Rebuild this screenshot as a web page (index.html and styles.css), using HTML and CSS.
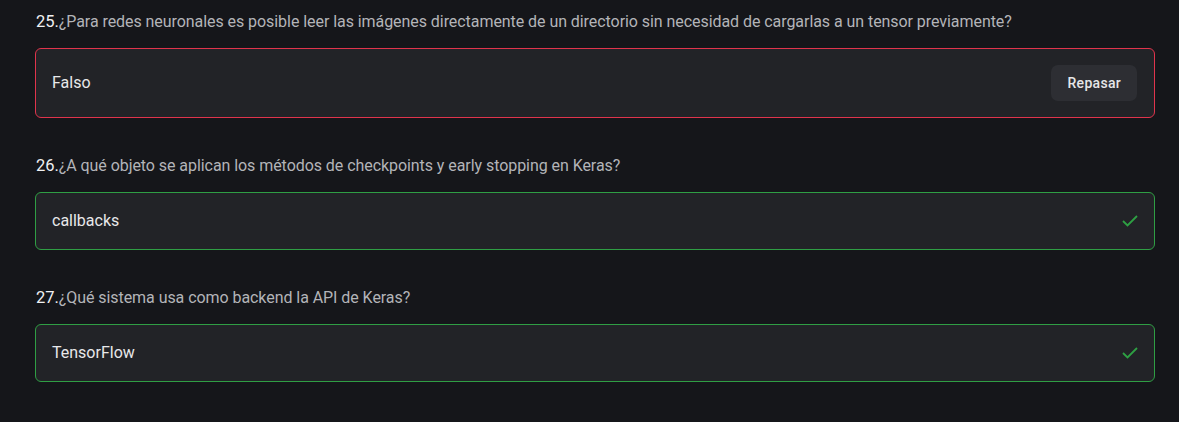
FILE: index.html
```html
<!DOCTYPE html>
<html lang="es">
<head>
<meta charset="utf-8">
<title>Preguntas</title>
<link rel="stylesheet" href="styles.css">
</head>
<body>
<main class="list">
  <section class="item">
    <p class="question"><span class="num">25.</span>¿Para redes neuronales es posible leer las imágenes directamente de un directorio sin necesidad de cargarlas a un tensor previamente?</p>
    <div class="answer wrong">
      <span class="text">Falso</span>
      <button class="review">Repasar</button>
    </div>
  </section>
  <section class="item">
    <p class="question"><span class="num">26.</span>¿A qué objeto se aplican los métodos de checkpoints y early stopping en Keras?</p>
    <div class="answer right">
      <span class="text">callbacks</span>
      <svg class="check" width="18" height="14" viewBox="0 0 18 14" aria-hidden="true"><path d="M2 7 L6.5 11.5 L16 2" fill="none" stroke="#2ea043" stroke-width="1.8"/></svg>
    </div>
  </section>
  <section class="item">
    <p class="question"><span class="num">27.</span>¿Qué sistema usa como backend la API de Keras?</p>
    <div class="answer right">
      <span class="text">TensorFlow</span>
      <svg class="check" width="18" height="14" viewBox="0 0 18 14" aria-hidden="true"><path d="M2 7 L6.5 11.5 L16 2" fill="none" stroke="#2ea043" stroke-width="1.8"/></svg>
    </div>
  </section>
</main>
</body>
</html>
```
FILE: styles.css
```css
html, body {
  margin: 0;
  padding: 0;
  background: #15161a;
}
body {
  font-family: Roboto, "Noto Sans", sans-serif;
  color: #e6e6e8;
}
.list {
  width: 1120px;
  padding: 10px 0 0 35px;
  display: flex;
  flex-direction: column;
  gap: 36px;
}
.item {
  display: flex;
  flex-direction: column;
  gap: 14px;
}
.question {
  margin: 0;
  padding-left: 1px;
  font-size: 16px;
  line-height: 24px;
  letter-spacing: -0.06px;
  color: #b3b4b8;
}
.num {
  color: #f0f0f2;
  font-size: 16.5px;
}
.answer {
  display: flex;
  align-items: center;
  justify-content: space-between;
  background: #222327;
  border: 1px solid;
  border-radius: 6px;
  padding: 16px 16px;
  min-height: 24px;
  box-sizing: content-box;
}
.answer.wrong { border-color: #e0344c; }
.answer.right { border-color: #2f9e44; }
.text {
  font-size: 16px;
  line-height: 24px;
  color: #e8e8ea;
}
.review {
  font-family: inherit;
  font-size: 14px;
  font-weight: 500;
  letter-spacing: 0.3px;
  color: #e6e6e8;
  background: #2d2e33;
  border: none;
  border-radius: 7px;
  height: 36px;
  padding: 0 16px;
  margin-right: 1px;
}
.check {
  display: block;
  margin-right: -1px;
}
```
